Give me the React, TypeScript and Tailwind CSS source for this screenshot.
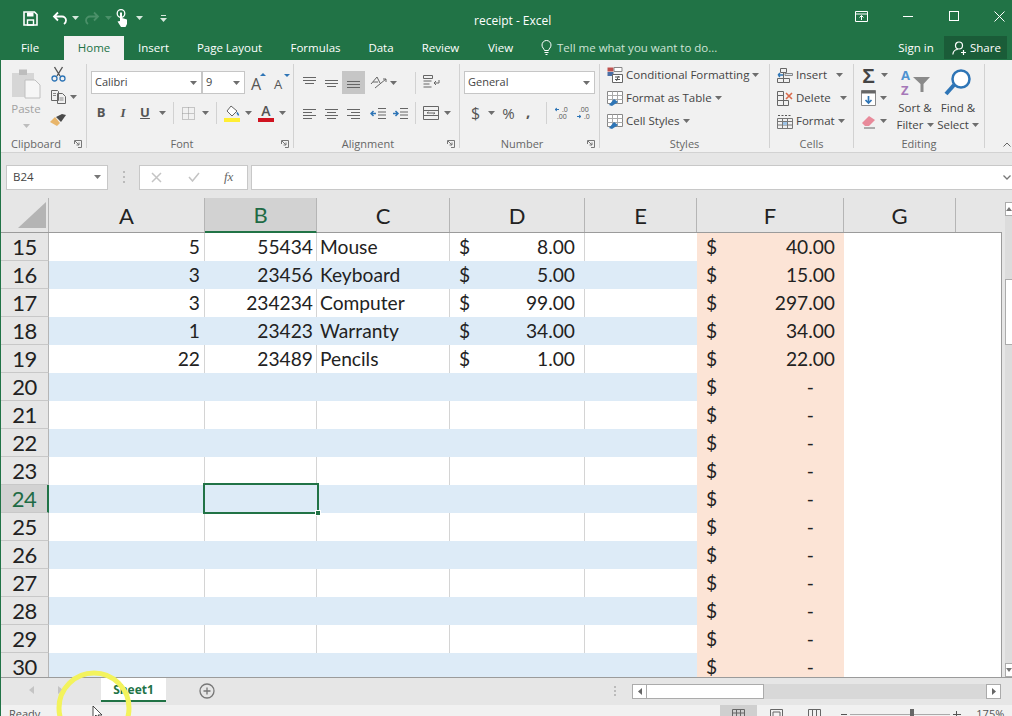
import type { ReactNode } from 'react'

const UI = "font-['Open_Sans','Noto_Sans',sans-serif]"
const CELL = "font-['Lato','Noto_Sans',sans-serif]"

function Caret({ color = '#6e6e6e' }: { color?: string }) {
  return (
    <svg width="7" height="4" viewBox="0 0 7 4" className="shrink-0">
      <path d="M0 0h7L3.5 4z" fill={color} />
    </svg>
  )
}

function Launcher() {
  return (
    <svg width="8" height="8" viewBox="0 0 8 8" fill="none" stroke="#777" strokeWidth="1">
      <path d="M.5 4V.5H7.5V7.5H4" />
      <path d="M1 1l4 4M5 2.5V5H2.5" />
    </svg>
  )
}

function Icon({ w, h, children }: { w: number; h: number; children: ReactNode }) {
  return (
    <svg width={w} height={h} viewBox={`0 0 ${w} ${h}`} fill="none" className="shrink-0">
      {children}
    </svg>
  )
}

function Lines({ rows, stroke = '#666' }: { rows: number[][]; stroke?: string }) {
  return (
    <Icon w={15} h={13}>
      {rows.map((r, i) => (
        <path key={i} d={`M${r[0]} ${r[2]}.5H${r[1]}`} stroke={stroke} />
      ))}
    </Icon>
  )
}

function Group({ width, label, labelWidth, launcher, children }: { width: string; label: string; labelWidth?: string; launcher?: boolean; children: ReactNode }) {
  return (
    <div className={`${width} h-full shrink-0 border-r border-[#d2d2d2] flex flex-col`}>
      <div className="h-[74px] shrink-0">{children}</div>
      <div className="h-[10px] shrink-0 flex items-center text-[11px] text-[#666] leading-none">
        <div className={`${labelWidth ?? 'flex-1'} text-center`}>{label}</div>
        {launcher && (
          <div className="ml-auto mr-[4px] mt-[2px]">
            <Launcher />
          </div>
        )}
      </div>
    </div>
  )
}

function TitleBar() {
  return (
    <div className="h-[36px] flex items-center text-white shrink-0">
      <div className="w-[474px] flex items-center pl-[23px] shrink-0">
        <Icon w={15} h={15}>
          <path d="M1 1h10.5L14 3.5V14H1z" stroke="#fff" strokeWidth="1.6" />
          <path d="M4 1.5h6.5v4H4z" fill="#fff" />
          <path d="M4.5 9h6v5h-6z" stroke="#fff" strokeWidth="1.4" />
        </Icon>
        <div className="ml-[14px]">
          <Icon w={16} h={14}>
            <path d="M6 1.5 2 5.5l4 4M2.5 5.5H10a4 4 0 0 1 4 4c0 1.500-.8 2.700-2 3.500" stroke="#fff" strokeWidth="1.8" />
          </Icon>
        </div>
        <div className="ml-[4px]"><Caret color="#d6e8dd" /></div>
        <div className="ml-[5px]">
          <Icon w={16} h={14}>
            <path d="M10 1.500l4 4-4 4M13.500 5.500H6a4 4 0 0 0-4 4c0 1.500.8 2.700 2 3.500" stroke="#4b9069" strokeWidth="1.8" />
          </Icon>
        </div>
        <div className="ml-[5px]"><Caret color="#4b9069" /></div>
        <div className="ml-[4px]">
          <Icon w={13} h={18}>
            <circle cx="5" cy="4.500" r="3.800" stroke="#fff" strokeWidth="1.300" />
            <path d="M4 3.500h2V9l5 1.500V15l-1.500 3H5L1.500 12.500l2.500-.5z" fill="#fff" />
          </Icon>
        </div>
        <div className="ml-[7px]"><Caret color="#d6e8dd" /></div>
        <div className="ml-[17px] flex flex-col items-center gap-[2px]">
          <div className="w-[5px] h-px bg-[#d6e8dd]" />
          <Caret color="#d6e8dd" />
        </div>
      </div>
      <div className={`${UI} w-[73px] text-[12px] text-center whitespace-nowrap pt-[5px] shrink-0`}>receipt - Excel</div>
      <div className="flex-1 flex items-center justify-end pb-[4px]">
        <Icon w={13} h={11}>
          <path d="M.5.500h12v10H.5zM.5 3H12.500M6.500 9V4.500M4.500 6.500l2-2 2 2" stroke="#fff" />
        </Icon>
        <div className="w-[10px] h-px bg-white ml-[35px]" />
        <div className="w-[10px] h-[10px] border border-white ml-[36px]" />
        <div className="ml-[35px] mr-[7px]">
          <Icon w={11} h={11}>
            <path d="M.5.500l10 10M10.500.500l-10 10" stroke="#fff" />
          </Icon>
        </div>
      </div>
    </div>
  )
}

function TabBar() {
  const tabs = [
    ['Insert', 'w-[59px]'],
    ['Page Layout', 'w-[93px]'],
    ['Formulas', 'w-[79px]'],
    ['Data', 'w-[52px]'],
    ['Review', 'w-[67px]'],
    ['View', 'w-[53px]'],
  ]
  return (
    <div className={`${UI} h-[24px] flex text-[11.5px] text-white shrink-0`}>
      <div className="w-[60px] text-center leading-[24px]">File</div>
      <div className="w-[60px] ml-[4px] bg-[#f1f1f1] text-[#217346] text-center leading-[24px]">Home</div>
      {tabs.map(([t, w]) => (
        <div key={t} className={`${w} text-center leading-[24px]`}>{t}</div>
      ))}
      <div className="ml-[14px] flex items-center pb-[1px]">
        <Icon w={11} h={15}>
          <path d="M3.500 10.500C3 8.500 1 7.800 1 5a4.500 4.500 0 0 1 9 0c0 2.800-2 3.500-2.500 5.500zM3.500 12.500h4M4.500 14.500h2" stroke="#fff" />
        </Icon>
        <span className="ml-[5px] text-[#cfe3d6] whitespace-nowrap">Tell me what you want to do...</span>
      </div>
      <div className="ml-auto w-[36px] text-center leading-[24px] whitespace-nowrap mr-[10px]">Sign in</div>
      <div className="w-[63px] mr-[5px] h-[23px] bg-[#1a5c38] flex items-center pl-[8px] gap-[3px]">
        <Icon w={15} h={14}>
          <circle cx="7" cy="4.500" r="3.500" stroke="#fff" strokeWidth="1.200" />
          <path d="M.8 13.500c.5-3.500 2.500-5 5-5M11.500 9v5M9 11.500h5" stroke="#fff" strokeWidth="1.200" />
        </Icon>
        <span>Share</span>
      </div>
    </div>
  )
}

function ClipboardGroup() {
  return (
    <div className="flex h-full">
      <div className="w-[50px] flex flex-col items-center pt-[4px]">
        <Icon w={30} h={31}>
          <path d="M1 5h22v24H1z" fill="#d6d6d6" />
          <path d="M8 1.500h8V7H8z" fill="#bdbdbd" />
          <path d="M14 12h10l5 5v13H14z" fill="#f6f6f6" stroke="#c0c0c0" />
        </Icon>
        <div className="text-[11.5px] text-[#a2a2a2] leading-none mt-[4px]">Paste</div>
        <div className="mt-[9px]"><Caret color="#bdbdbd" /></div>
      </div>
      <div className="flex flex-col pt-[2px]">
        <Icon w={15} h={16}>
          <path d="M3.500 1 9 10M11.500 1 6 10" stroke="#555" strokeWidth="1.400" />
          <circle cx="3.500" cy="12.500" r="2.500" stroke="#2e75b6" strokeWidth="1.300" />
          <circle cx="11.500" cy="12.500" r="2.500" stroke="#2e75b6" strokeWidth="1.300" />
        </Icon>
        <div className="flex items-center mt-[8px] gap-[4px]">
          <Icon w={15} h={14}>
            <path d="M.5.500h6l1 1v9H.5zM6.500 3.500h5l3 3v7h-8z" fill="#f1f1f1" stroke="#666" />
            <path d="M8.500 8h4M8.500 10h4M2 3.500h3M2 5.500h3" stroke="#888" />
          </Icon>
          <Caret />
        </div>
        <div className="mt-[9px] ml-[-1px]">
          <Icon w={17} h={14}>
            <path d="M0 9l5-5 5 6-3 3z" fill="#e8b56a" />
            <path d="M6 4l6-3 4 1-5 7z" fill="#4a4a4a" />
          </Icon>
        </div>
      </div>
    </div>
  )
}

function Select({ width, label, caretGap }: { width: string; label: string; caretGap: string }) {
  return (
    <div className={`${width} h-[23px] bg-white border border-[#c6c6c6] flex items-center pl-[3px] text-[11px] text-[#444] shrink-0`}>
      <span>{label}</span>
      <span className={`${caretGap} ml-auto`}><Caret /></span>
    </div>
  )
}

function FontGroup() {
  return (
    <div className="flex flex-col pl-[4px] pt-[7px]">
      <div className="flex items-center h-[23px]">
        <Select width="w-[111px]" label="Calibri" caretGap="mr-[4px]" />
        <Select width="w-[43px]" label="9" caretGap="mr-[4px]" />
        <div className="ml-[6px] relative w-[15px] text-[16px] leading-none text-[#555] pt-[2px]">
          A<span className="absolute right-0 top-[-1px] w-0 h-0 border-x-[3px] border-x-transparent border-b-[3px] border-b-[#2e75b6]" />
        </div>
        <div className="ml-[8px] relative w-[15px] text-[13px] leading-none text-[#555] pt-[4px]">
          A<span className="absolute right-[-1px] top-0 w-0 h-0 border-x-[3px] border-x-transparent border-t-[3px] border-t-[#2e75b6]" />
        </div>
      </div>
      <div className="flex items-center h-[24px] mt-[7px] text-[#555]">
        <span className="w-[10px] ml-[5px] text-[13px] font-bold text-center">B</span>
        <span className="w-[10px] ml-[12px] text-[13px] italic font-semibold text-center font-['Liberation_Serif',serif]">I</span>
        <span className="w-[10px] ml-[12px] text-[13px] font-bold underline text-center">U</span>
        <span className="ml-[9px]"><Caret /></span>
        <div className="w-px h-[22px] bg-[#d2d2d2] ml-[7px]" />
        <div className="ml-[8px]">
          <Icon w={13} h={13}>
            <path d="M.5.500h12v12H.5zM6.500.500v12M.5 6.500h12" stroke="#999" strokeDasharray="1 1" />
          </Icon>
        </div>
        <span className="ml-[7px]"><Caret /></span>
        <div className="w-px h-[22px] bg-[#d2d2d2] ml-[7px]" />
        <div className="ml-[7px] flex flex-col items-center">
          <Icon w={16} h={13}>
            <path d="M7 1l6 5-5 5-5-5z" fill="#fff" stroke="#666" />
            <path d="M13 7.500c1 1.500 1.500 2.200 1.500 3" stroke="#2e75b6" strokeWidth="1.500" />
          </Icon>
          <div className="w-[16px] h-[4px] bg-[#ffee33]" />
        </div>
        <span className="ml-[5px]"><Caret /></span>
        <div className="ml-[6px] flex flex-col items-center">
          <span className="text-[14px] font-semibold leading-[12px] h-[13px] text-[#555]">A</span>
          <div className="w-[16px] h-[4px] bg-[#d01320]" />
        </div>
        <span className="ml-[5px]"><Caret /></span>
      </div>
    </div>
  )
}

function AlignmentGroup() {
  const top: number[][][] = [
    [[1, 14, 1], [1, 14, 4], [3, 12, 7]],
    [[1, 14, 4], [1, 14, 7], [3, 12, 10]],
  ]
  return (
    <div className="flex flex-col pl-[8px] pt-[7px]">
      <div className="flex items-center h-[23px]">
        <Lines rows={top[0]} />
        <div className="ml-[7px]"><Lines rows={top[1]} /></div>
        <div className="ml-[3px] w-[23px] h-[23px] bg-[#c6c6c6] flex items-center justify-center pt-[4px]">
          <Lines rows={[[1, 14, 3], [1, 14, 6], [1, 14, 9]]} />
        </div>
        <div className="ml-[5px]">
          <Icon w={17} h={15}>
            <path d="M1 9l6-7 3 6M3 7h5M5 13l11-9M13 4h3v3" stroke="#666" />
          </Icon>
        </div>
        <span className="ml-[3px]"><Caret /></span>
        <div className="w-px h-[22px] bg-[#d2d2d2] ml-[18px]" />
        <div className="ml-[7px]">
          <Icon w={17} h={15}>
            <path d="M.5.500h9v3h-9zM.5 6h8M.5 9h6M.5 12h8M16 5v3h-5M13 6l-2 2 2 2" stroke="#666" />
          </Icon>
        </div>
      </div>
      <div className="flex items-center h-[24px] mt-[7px]">
        <Lines rows={[[1, 14, 2], [1, 10, 5], [1, 14, 8], [1, 10, 11]]} />
        <div className="ml-[7px]"><Lines rows={[[1, 14, 2], [3, 12, 5], [1, 14, 8], [3, 12, 11]]} /></div>
        <div className="ml-[7px]"><Lines rows={[[1, 14, 2], [5, 14, 5], [1, 14, 8], [5, 14, 11]]} /></div>
        <div className="ml-[9px]">
          <Icon w={17} h={13}>
            <path d="M8 1.500h8M8 5h8M8 8h8M8 11.500h8" stroke="#666" />
            <path d="M1 6.500h5M3.500 4 1 6.500 3.500 9" stroke="#2e75b6" strokeWidth="1.500" />
          </Icon>
        </div>
        <div className="ml-[5px]">
          <Icon w={17} h={13}>
            <path d="M8 1.500h8M8 5h8M8 8h8M8 11.500h8" stroke="#666" />
            <path d="M1 6.500h5M3.500 4 6 6.500 3.500 9" stroke="#2e75b6" strokeWidth="1.500" />
          </Icon>
        </div>
        <div className="w-px h-[22px] bg-[#d2d2d2] ml-[6px]" />
        <div className="ml-[7px]">
          <Icon w={16} h={14}>
            <path d="M.5.500h15v13H.5zM.5 4.500h15M.5 9.500h15M4 7h8M4 7l1.500-1M12 7l-1.500 1" stroke="#666" />
          </Icon>
        </div>
        <span className="ml-[5px]"><Caret /></span>
      </div>
    </div>
  )
}

function NumberGroup() {
  return (
    <div className="flex flex-col pl-[4px] pt-[7px]">
      <Select width="w-[131px]" label="General" caretGap="mr-[4px]" />
      <div className="flex items-center h-[24px] mt-[7px] text-[#555]">
        <span className="ml-[7px] w-[9px] text-[16px] text-center">$</span>
        <span className="ml-[8px]"><Caret /></span>
        <span className="ml-[7px] w-[13px] text-[15px] text-center">%</span>
        <span className="ml-[11px] w-[5px] text-[15px] font-bold leading-none pb-[4px]">,</span>
        <div className="w-px h-[22px] bg-[#d2d2d2] ml-[15px]" />
        <div className="ml-[7px]">
          <Icon w={16} h={15}>
            <path d="M1 3.500h4M1 3.500 3 2M1 3.500 3 5" stroke="#2e75b6" />
            <text x="8" y="6" fontSize="7" fill="#555">.0</text>
            <text x="3" y="13" fontSize="7" fill="#555">.00</text>
          </Icon>
        </div>
        <div className="ml-[6px]">
          <Icon w={16} h={15}>
            <path d="M1 10.500h4M5 10.500 3 9M5 10.500 3 12" stroke="#2e75b6" />
            <text x="3" y="6" fontSize="7" fill="#555">.00</text>
            <text x="8" y="13" fontSize="7" fill="#555">.0</text>
          </Icon>
        </div>
      </div>
    </div>
  )
}

function StylesGroup() {
  const cellIcon = (
    <Icon w={16} h={15}>
      <path d="M.5.500h15v12H.5z" fill="#fff" stroke="#888" />
      <path d="M.5 4.500h15M.5 8.500h15M5.500.500v12M10.500.500v12" stroke="#aaa" />
      <path d="M2 14l5-6 4 3-6 4z" fill="#2e75b6" />
    </Icon>
  )
  return (
    <div className="flex flex-col pl-[7px] pt-[3px] gap-[7px] text-[11.5px] text-[#444]">
      <div className="h-[16px] flex items-center">
        <Icon w={16} h={16}>
          <path d="M.5.500h6v4h-6z" fill="#c0504d" />
          <path d="M.5 5h6v4h-6z" fill="#4a6fa5" />
          <path d="M7 .500h8v4H7z" fill="#fff" stroke="#888" />
          <path d="M5.500 7.500h10v8h-10z" fill="#fff" stroke="#666" />
          <path d="M8 10h5M8 12.500h5M11.500 9l-2 5" stroke="#555" />
        </Icon>
        <span className="ml-[3px] whitespace-nowrap">Conditional Formatting</span>
        <span className="ml-[3px]"><Caret /></span>
      </div>
      <div className="h-[16px] flex items-center">
        {cellIcon}
        <span className="ml-[3px] whitespace-nowrap">Format as Table</span>
        <span className="ml-[3px]"><Caret /></span>
      </div>
      <div className="h-[16px] flex items-center">
        {cellIcon}
        <span className="ml-[3px] whitespace-nowrap">Cell Styles</span>
        <span className="ml-[3px]"><Caret /></span>
      </div>
    </div>
  )
}

function CellsGroup() {
  return (
    <div className="flex flex-col pl-[7px] pt-[3px] gap-[7px] text-[11.5px] text-[#444]">
      <div className="h-[16px] flex items-center">
        <Icon w={16} h={15}>
          <path d="M3.500.500h6v4h-6zM.5 10.500h6v4h-6zM6.500 10.500h6v4h-6zM6.500 4.500v6" stroke="#666" />
          <path d="M8 7.500h7.500v-2H8z" fill="#dce6f1" stroke="#888" />
          <path d="M1 7h5M1 7l2-2M1 7l2 2" stroke="#2e75b6" strokeWidth="1.300" />
        </Icon>
        <span className="ml-[3px]">Insert</span>
        <span className="ml-[9px]"><Caret /></span>
      </div>
      <div className="h-[16px] flex items-center">
        <Icon w={16} h={15}>
          <path d="M.5.500h6v4h-6zM.5 4.500h6v5h-6zM.5 9.500h6v5h-6zM6.500 9.500h5v5h-5z" stroke="#666" />
          <path d="M9 2l6 6M15 2l-6 6" stroke="#d9694a" strokeWidth="1.600" />
        </Icon>
        <span className="ml-[3px]">Delete</span>
        <span className="ml-[9px]"><Caret /></span>
      </div>
      <div className="h-[16px] flex items-center">
        <Icon w={16} h={15}>
          <path d="M.5 4.500h15v10H.5zM.5 7.500h15M.5 11h15M5.500 4.500v10M10.500 4.500v10" stroke="#777" />
          <path d="M6 8h4v3H6z" fill="#9dc3e6" />
          <path d="M1 1.500h14" stroke="#555" strokeDasharray="2 1.500" />
        </Icon>
        <span className="ml-[3px]">Format</span>
        <span className="ml-[3px]"><Caret /></span>
      </div>
    </div>
  )
}

function EditingGroup() {
  return (
    <div className="flex pt-[3px] text-[11.5px] text-[#444]">
      <div className="flex flex-col pl-[7px] gap-[7px] w-[39px] shrink-0">
        <div className="h-[16px] flex items-center">
          <span className="w-[15px] text-[21px] leading-none text-[#444] font-['Liberation_Sans',sans-serif] font-bold text-center">Σ</span>
          <span className="ml-[5px]"><Caret /></span>
        </div>
        <div className="h-[16px] flex items-center">
          <Icon w={15} h={16}>
            <path d="M.5.500h14v15H.5z" fill="#fff" stroke="#888" />
            <path d="M.5.500h14v3H.5z" fill="#666" />
            <path d="M7.500 6v7M4.500 10l3 3 3-3" stroke="#2e75b6" strokeWidth="1.700" />
          </Icon>
          <span className="ml-[4px]"><Caret /></span>
        </div>
        <div className="h-[16px] flex items-center">
          <Icon w={15} h={15}>
            <path d="M1 9l7-7 6 4-6 6H4z" fill="#e88a9a" />
            <path d="M3 14h11" stroke="#666" />
          </Icon>
          <span className="ml-[4px]"><Caret /></span>
        </div>
      </div>
      <div className="w-[44px] flex flex-col items-center shrink-0 pt-[1px]">
        <Icon w={31} h={28}>
          <text x="1" y="12" fontSize="13" fontWeight="700" fill="#4f93d1">A</text>
          <text x="1" y="27" fontSize="13" fontWeight="700" fill="#a678b8">Z</text>
          <path d="M13 9h17l-6.500 7v8h-3v-8z" fill="#8a8a8a" />
        </Icon>
        <div className="leading-[16px] mt-[4px] text-center whitespace-nowrap">Sort &amp;</div>
        <div className="leading-[16px] mt-px flex items-center gap-[3px] whitespace-nowrap">Filter <Caret /></div>
      </div>
      <div className="w-[42px] flex flex-col items-center shrink-0 pt-[1px]">
        <Icon w={28} h={28}>
          <circle cx="17" cy="11" r="8.500" stroke="#2e75b6" strokeWidth="2.500" fill="#fff" />
          <path d="M10 17 2 26" stroke="#2e75b6" strokeWidth="4" />
        </Icon>
        <div className="leading-[16px] mt-[4px] text-center whitespace-nowrap">Find &amp;</div>
        <div className="leading-[16px] mt-px flex items-center gap-[3px] whitespace-nowrap">Select <Caret /></div>
      </div>
    </div>
  )
}

function Ribbon() {
  return (
    <div className={`${UI} h-[93px] shrink-0 bg-[#f1f1f1] border-b border-[#d2d2d2] flex pt-[4px] pb-[4px]`}>
      <Group width="w-[86px]" label="Clipboard" labelWidth="w-[70px]" launcher><ClipboardGroup /></Group>
      <Group width="w-[207px]" label="Font" labelWidth="w-[190px]" launcher><FontGroup /></Group>
      <Group width="w-[166px]" label="Alignment" labelWidth="w-[148px]" launcher><AlignmentGroup /></Group>
      <Group width="w-[140px]" label="Number" labelWidth="w-[124px]" launcher><NumberGroup /></Group>
      <Group width="w-[170px]" label="Styles"><StylesGroup /></Group>
      <Group width="w-[84px]" label="Cells"><CellsGroup /></Group>
      <Group width="w-[131px]" label="Editing"><EditingGroup /></Group>
      <div className="flex-1 flex items-end justify-end pr-[1px] pb-[1px]">
        <svg width="8" height="5" viewBox="0 0 8 5" fill="none" stroke="#666">
          <path d="M.5 4.500 4 1l3.500 3.500" />
        </svg>
      </div>
    </div>
  )
}

function FormulaBar() {
  return (
    <div className={`${UI} h-[45px] shrink-0 bg-[#e6e6e6] flex items-center pl-[5px] pt-[3px]`}>
      <div className="w-[102px] h-[25px] bg-white border border-[#c8c8c8] flex items-center pl-[6px] text-[11.5px] text-[#444]">
        B24
        <span className="ml-auto mr-[6px]"><Caret color="#777" /></span>
      </div>
      <div className="ml-[15px] w-[2px] flex flex-col gap-[3px]">
        <div className="h-[2px] bg-[#bbb]" />
        <div className="h-[2px] bg-[#bbb]" />
        <div className="h-[2px] bg-[#bbb]" />
      </div>
      <div className="ml-[14px] w-[109px] h-[25px] bg-white border border-[#c8c8c8] flex items-center">
        <div className="ml-[11px]">
          <Icon w={11} h={11}>
            <path d="M1 1l9 9M10 1l-9 9" stroke="#c4c4c4" strokeWidth="1.500" />
          </Icon>
        </div>
        <div className="ml-[26px]">
          <Icon w={12} h={10}>
            <path d="M1 5l3.500 4L11 1" stroke="#c4c4c4" strokeWidth="1.500" />
          </Icon>
        </div>
        <span className="ml-[24px] font-['Liberation_Serif',serif] italic text-[13px] text-[#666]">fx</span>
      </div>
      <div className="ml-[3px] flex-1 h-[25px] bg-white border border-[#c8c8c8] border-r-0 flex items-center justify-end pr-[1px]">
        <svg width="8" height="5" viewBox="0 0 8 5" fill="none" stroke="#777" strokeWidth="1.300">
          <path d="M.5.500 4 4 7.500.500" />
        </svg>
      </div>
    </div>
  )
}

const columns = [
  { name: 'A', w: 'w-[156px]' },
  { name: 'B', w: 'w-[112px]' },
  { name: 'C', w: 'w-[133px]' },
  { name: 'D', w: 'w-[135px]' },
  { name: 'E', w: 'w-[112px]' },
  { name: 'F', w: 'w-[147px]' },
  { name: 'G', w: 'w-[112px]' },
]

type Row = { n: number; a?: string; b?: string; c?: string; d?: string; f: string }

const rows: Row[] = [
  { n: 15, a: '5', b: '55434', c: 'Mouse', d: '8.00', f: '40.00' },
  { n: 16, a: '3', b: '23456', c: 'Keyboard', d: '5.00', f: '15.00' },
  { n: 17, a: '3', b: '234234', c: 'Computer', d: '99.00', f: '297.00' },
  { n: 18, a: '1', b: '23423', c: 'Warranty', d: '34.00', f: '34.00' },
  { n: 19, a: '22', b: '23489', c: 'Pencils', d: '1.00', f: '22.00' },
  ...[20, 21, 22, 23, 24, 25, 26, 27, 28, 29, 30].map((n) => ({ n, f: '-' })),
]

function ColumnHeader() {
  return (
    <div className={`${CELL} h-[35px] shrink-0 bg-[#e6e6e6] flex border-b border-[#9b9b9b] text-[22px] text-[#222]`}>
      <div className="w-[48px] shrink-0 pl-[17px] pt-[4px] border-r border-[#b5b5b5]">
        <svg width="28" height="26" viewBox="0 0 28 26">
          <path d="M28 0v26H0z" fill="#b4b4b4" />
        </svg>
      </div>
      {columns.map((c) => (
        <div
          key={c.name}
          className={`${c.w} shrink-0 flex items-center justify-center border-r border-[#b5b5b5] ${
            c.name === 'B' ? 'bg-[#d2d2d2] text-[#1f6b45] border-b-2 border-b-[#217346] mb-[-1px]' : ''
          }`}
        >
          {c.name}
        </div>
      ))}
      <div className="flex-1" />
    </div>
  )
}

function SheetRow({ row, index }: { row: Row; index: number }) {
  const band = index % 2 === 1
  const selected = row.n === 24
  const line = band ? 'border-r border-transparent' : 'border-r border-[#d4d4d4]'
  const money = (value?: string) =>
    value ? (
      <div className="flex justify-between px-[9px] w-full">
        <span>$</span>
        <span className={value === '-' ? 'pr-[21px]' : ''}>{value}</span>
      </div>
    ) : null
  return (
    <div className={`h-[28px] shrink-0 flex items-center text-[19.2px] leading-[28px] text-[#222] ${band ? 'bg-[#ddebf7]' : 'bg-white'}`}>
      <div className={`w-[48px] shrink-0 h-full text-center text-[22px] tracking-[-0.5px] border-r border-b border-b-[#c8c8c8] ${selected ? 'bg-[#d2d2d2] text-[#1f6b45] border-r-2 border-r-[#217346]' : 'bg-[#e6e6e6] border-r-[#b5b5b5]'}`}>
        {row.n}
      </div>
      <div className={`w-[156px] shrink-0 h-full text-right pr-[4px] ${line}`}>{row.a}</div>
      <div className={`w-[112px] shrink-0 h-full text-right pr-[3px] ${line}`}>{row.b}</div>
      <div className={`w-[133px] shrink-0 h-full pl-[3px] ${line}`}>{row.c}</div>
      <div className={`w-[135px] shrink-0 h-full ${line}`}>{money(row.d)}</div>
      <div className="w-[112px] shrink-0 h-full" />
      <div className="w-[147px] shrink-0 h-full bg-[#fce4d6]">{money(row.f)}</div>
      <div className="flex-1 h-full bg-white" />
    </div>
  )
}

function VerticalScrollbar() {
  return (
    <div className="flex-1 bg-[#e6e6e6] flex flex-col pl-[3px] pt-[4px]">
      <div className="h-[14px] shrink-0 bg-white border border-[#ababab] border-r-0 flex items-center justify-center">
        <svg width="6" height="4" viewBox="0 0 6 4"><path d="M0 4h6L3 0z" fill="#777" /></svg>
      </div>
      <div className="h-[63px] shrink-0 bg-[#dcdcdc]" />
      <div className="h-[66px] shrink-0 bg-white border border-[#ababab] border-r-0" />
      <div className="flex-1 bg-[#dcdcdc]" />
      <div className="h-[14px] shrink-0 bg-white border border-[#ababab] border-r-0 flex items-center justify-center">
        <svg width="6" height="4" viewBox="0 0 6 4"><path d="M0 0h6L3 4z" fill="#777" /></svg>
      </div>
    </div>
  )
}

function Sheet() {
  return (
    <div className="flex flex-1 min-h-0 relative">
      <div className="w-[1001px] shrink-0 flex flex-col min-h-0">
        <ColumnHeader />
        <div className={`${CELL} flex-1 min-h-0 overflow-hidden flex flex-col border-r border-[#9b9b9b]`}>
          {rows.map((r, i) => (
            <SheetRow key={r.n} row={r} index={i} />
          ))}
        </div>
      </div>
      <VerticalScrollbar />
      {/* selected cell B24 */}
      <div className="absolute left-[202px] top-[285px] w-[116px] h-[31px] border-2 border-[#217346]">
        <div className="absolute right-[-4px] bottom-[-4px] w-[6px] h-[6px] bg-[#217346] border border-white" />
      </div>
    </div>
  )
}

function SheetTabs() {
  return (
    <div className={`${UI} h-[28px] shrink-0 bg-[#e6e6e6] border-t border-[#9b9b9b] flex`}>
      <div className="w-[100px] shrink-0 flex items-center pl-[28px] gap-[24px] pb-[3px]">
        <svg width="5" height="8" viewBox="0 0 5 8"><path d="M5 0v8L0 4z" fill="#c4c4c4" /></svg>
        <svg width="5" height="8" viewBox="0 0 5 8"><path d="M0 0v8l5-4z" fill="#c4c4c4" /></svg>
      </div>
      <div className="w-[65px] h-[24px] shrink-0 bg-white border-b-2 border-[#217346] text-[12px] font-bold text-[#217346] text-center leading-[24px]">
        Sheet1
      </div>
      <div className="ml-[33px] mt-[5px]">
        <svg width="16" height="16" viewBox="0 0 16 16" fill="none" stroke="#777" strokeWidth="1.300">
          <circle cx="8" cy="8" r="7" />
          <path d="M8 4.500v7M4.500 8h7" />
        </svg>
      </div>
      <div className="ml-[399px] mt-[8px] w-[2px] flex flex-col gap-[2px]">
        <div className="h-[2px] bg-[#bbb]" />
        <div className="h-[2px] bg-[#bbb]" />
        <div className="h-[2px] bg-[#bbb]" />
      </div>
      <div className="ml-[16px] mt-[6px] w-[369px] h-[15px] flex bg-[#d8d8d8]">
        <div className="w-[15px] bg-white border border-[#ababab] flex items-center justify-center">
          <svg width="4" height="7" viewBox="0 0 4 7"><path d="M4 0v7L0 3.500z" fill="#666" /></svg>
        </div>
        <div className="w-[117px] bg-white border border-[#ababab] border-l-0" />
        <div className="flex-1" />
        <div className="w-[15px] bg-white border border-[#ababab] flex items-center justify-center">
          <svg width="4" height="7" viewBox="0 0 4 7"><path d="M0 0v7l4-3.500z" fill="#666" /></svg>
        </div>
      </div>
    </div>
  )
}

function StatusBar() {
  return (
    <div className={`${UI} h-[11px] shrink-0 bg-[#f1f1f1] flex text-[11px] text-[#555] overflow-hidden`}>
      <span className="ml-[8px] mt-[2px] leading-[14px]">Ready</span>
      <div className="ml-[680px] w-[37px] h-full bg-[#cfcfcf] flex justify-center pt-[4px]">
        <Icon w={13} h={10}>
          <path d="M.5.500h12v9H.5zM4.500.500v9M8.500.500v9M.5 4h12" stroke="#666" />
        </Icon>
      </div>
      <div className="ml-[13px] pt-[4px]">
        <Icon w={13} h={10}>
          <path d="M.5.500h12v9H.5zM3 3h7v6H3z" stroke="#666" />
        </Icon>
      </div>
      <div className="ml-[25px] pt-[4px]">
        <Icon w={13} h={10}>
          <path d="M.5.500h12v9H.5zM4.500.500v9M8.500.500v9" stroke="#666" />
        </Icon>
      </div>
      <div className="w-[6px] h-px bg-[#555] mt-[9px] ml-[20px]" />
      <div className="ml-[3px] w-[100px] h-px bg-[#aaa] mt-[9px] relative">
        <div className="absolute left-[60px] top-[-5px] w-[4px] h-[10px] bg-[#666]" />
      </div>
      <div className="ml-[3px] mt-[6px] text-[#555] w-[8px] h-[8px] relative">
        <div className="absolute left-0 top-[3px] w-[8px] h-px bg-[#555]" />
        <div className="absolute left-[3px] top-0 w-px h-[8px] bg-[#555]" />
      </div>
      <span className="ml-[15px] mt-[2px] leading-[14px]">175%</span>
    </div>
  )
}

export default function App() {
  return (
    <div className="relative w-[1012px] h-[716px] overflow-hidden bg-[#217346] flex flex-col">
      <TitleBar />
      <TabBar />
      <div className="flex-1 min-h-0 flex flex-col ml-px">
        <Ribbon />
        <FormulaBar />
        <Sheet />
        <SheetTabs />
        <StatusBar />
      </div>
      {/* recording highlight round the mouse pointer */}
      <svg className="absolute left-[50px] top-[664px] pointer-events-none" width="90" height="52" viewBox="0 0 90 52" fill="none">
        <circle cx="44" cy="44" r="35" stroke="#f3f35c" strokeWidth="5" />
        <path d="M43 42v12l3-3 2 4h2l-2-4h4z" fill="#fff" stroke="#222" strokeWidth="0.8" />
      </svg>
    </div>
  )
}
